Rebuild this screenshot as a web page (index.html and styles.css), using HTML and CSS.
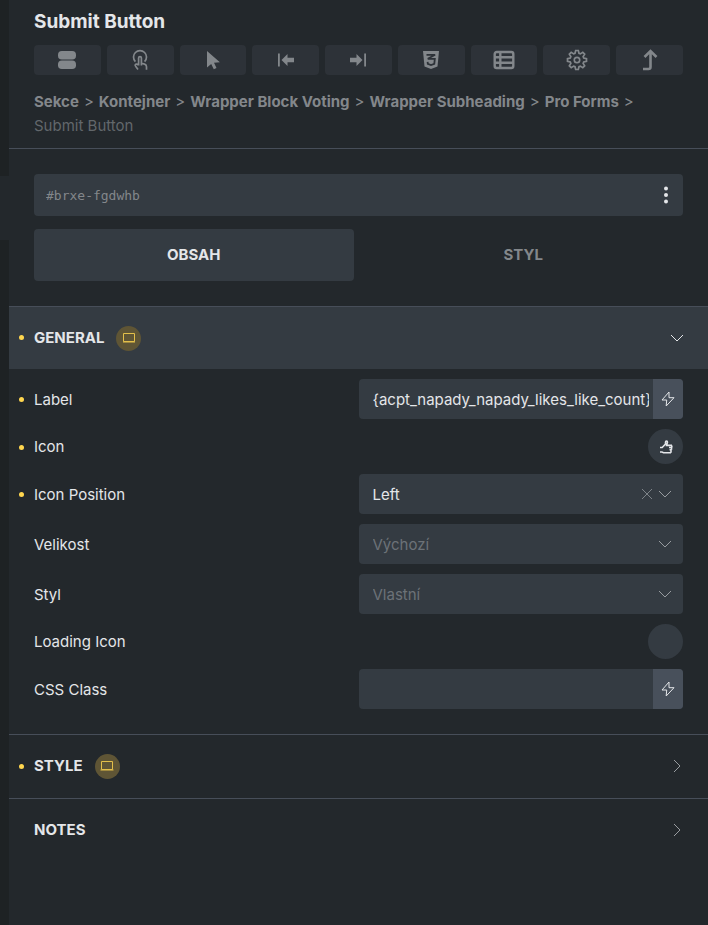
FILE: index.html
```html
<!DOCTYPE html>
<html lang="cs">
<head>
<meta charset="utf-8">
<title>Submit Button</title>
<link rel="stylesheet" href="styles.css">
</head>
<body>
<div class="edge"><div class="edge-handle"></div></div>
<main class="panel">
  <header class="panel-header">
    <h1 class="title">Submit Button</h1>
    <div class="toolbar">
      <button class="tool" aria-label="Block"><svg width="20" height="20" viewBox="0 0 20 20"><rect x="1" y="1" width="18" height="8.500" rx="3.800"/><rect x="1" y="10.500" width="18" height="8.500" rx="3.800"/></svg></button>
      <button class="tool" aria-label="Interactions"><svg width="20" height="22" viewBox="0 0 20 22" class="line"><path d="M5.400 12.700A6.500 6.500 0 1 1 14.600 12.700"/><path d="M8.600 16.500V9a1.400 1.400 0 0 1 2.800 0v5.200l3.200.9c1.300.4 1.900 1.300 1.900 2.600v3M8.600 16.200c-1-1.300-2.700-1.500-3.300-.6-.4.600 0 1.300.5 1.900l2.200 2.900M11.400 14.200v2.200"/></svg></button>
      <button class="tool" aria-label="Pseudo-class"><svg width="20" height="20" viewBox="0 0 20 20"><path d="M4 1v16.600l4.200-3.700 2.600 5.300 2.700-1.300-2.500-5.100 5.900-.5z"/></svg></button>
      <button class="tool" aria-label="Move left"><svg width="20" height="20" viewBox="0 0 20 20"><path d="M2 3.500h1.800v13H2zM5.500 10l6-6v3.700H18v4.600h-6.500V16z"/></svg></button>
      <button class="tool" aria-label="Move right"><svg width="20" height="20" viewBox="0 0 20 20"><path d="M16.200 3.500H18v13h-1.800zM14.500 10l-6-6v3.700H2v4.600h6.500V16z"/></svg></button>
      <button class="tool" aria-label="CSS"><svg width="20" height="20" viewBox="0 0 20 20"><path d="M2 1h16l-1.500 15.500L10 19l-6.500-2.500z"/><path class="cut" d="M5.500 4.800h8.600L6.800 8.800h7l-.5 5-3.300 1.200-3.200-1.200-.2-2"/></svg></button>
      <button class="tool" aria-label="Attributes"><svg width="22" height="20" viewBox="0 0 22 20"><rect class="frame" x="1.700" y="2" width="18.600" height="16" rx="2"/><path class="frame" d="M2 7.300h18M2 12.700h18M7.300 2v16"/></svg></button>
      <button class="tool" aria-label="Settings"><svg width="22" height="22" viewBox="-11 -11 22 22" class="line"><path d="M9.500-1.300V1.300L6.700 2 6.150 3.350 7.670 5.780 5.780 7.670 3.350 6.150 2 6.700 1.300 9.500H-1.300L-2 6.700-3.350 6.150-5.780 7.670-7.670 5.780-6.150 3.350-6.700 2-9.500 1.300V-1.300L-6.700-2-6.150-3.350-7.670-5.780-5.780-7.670-3.350-6.150-2-6.700-1.300-9.500H1.300L2-6.700 3.350-6.150 5.780-7.670 7.670-5.780 6.150-3.350 6.700-2z"/><circle r="2.700"/></svg></button>
      <button class="tool" aria-label="Select parent"><svg width="20" height="22" viewBox="0 0 20 22" class="thick"><path d="M3 20h5.500q2 0 2-2V3M4.500 8l6-6 6 6"/></svg></button>
    </div>
    <nav class="crumbs" aria-label="Breadcrumb"><a href="#">Sekce</a><span class="sep">&gt;</span><a href="#">Kontejner</a><span class="sep">&gt;</span><a href="#">Wrapper Block Voting</a><span class="sep">&gt;</span><a href="#">Wrapper Subheading</a><span class="sep">&gt;</span><a href="#">Pro Forms</a><span class="sep">&gt;</span><br><span class="current">Submit Button</span></nav>
  </header>

  <section class="identity">
    <div class="id-box">
      <input class="id-input" aria-label="Element ID" value="#brxe-fgdwhb">
      <button class="more" aria-label="More"><svg width="6" height="18" viewBox="0 0 6 18"><circle cx="3" cy="2.500" r="2"/><circle cx="3" cy="9" r="2"/><circle cx="3" cy="15.500" r="2"/></svg></button>
    </div>
    <div class="tabs">
      <button class="tab active">Obsah</button>
      <button class="tab">Styl</button>
    </div>
  </section>

  <section class="group">
    <button class="group-head open changed"><span>General</span><span class="device"><svg width="14" height="12" viewBox="0 0 14 12"><path d="M1.500 1.500h11v8h-11zM1 10h12"/></svg></span><svg class="chevron" width="14" height="14" viewBox="0 0 14 14"><path d="M1 4l6 6 6-6"/></svg></button>
    <div class="controls">
      <div class="row changed"><label for="label">Label</label><div class="field"><input id="label" class="box" value="{acpt_napady_napady_likes_like_count}"><button class="dynamic" aria-label="Dynamic data"><svg width="14" height="16" viewBox="0 0 14 16"><path d="M8 1L1 9h4.700L5.200 15 13 6.700H8z"/></svg></button></div></div>
      <div class="row changed"><label for="icon">Icon</label><button id="icon" class="round"><svg width="14" height="14" viewBox="0 0 14 14"><path d="M1 7.500h2.200L6.500 4V2.200q0-1.200 1-1.200t1 1.200L7.600 5.400H13M10 7.500h3M10.500 9.700h2M1 12h2l1.500.7h7.500M12.800 5.400v2.100M12.500 7.500v2.200M12 9.700v3"/></svg></button></div>
      <div class="row changed"><label for="position">Icon Position</label><div class="field"><select id="position" class="box"><option>Left</option></select><button class="clear" aria-label="Clear"><svg width="12" height="12" viewBox="0 0 12 12"><path d="M1 1l10 10M11 1L1 11"/></svg></button><svg class="arrow" width="14" height="14" viewBox="0 0 14 14"><path d="M1 4l6 6 6-6"/></svg></div></div>
      <div class="row"><label for="size">Velikost</label><div class="field"><select id="size" class="box empty"><option>Výchozí</option></select><svg class="arrow" width="14" height="14" viewBox="0 0 14 14"><path d="M1 4l6 6 6-6"/></svg></div></div>
      <div class="row"><label for="style">Styl</label><div class="field"><select id="style" class="box empty"><option>Vlastní</option></select><svg class="arrow" width="14" height="14" viewBox="0 0 14 14"><path d="M1 4l6 6 6-6"/></svg></div></div>
      <div class="row"><label for="loading">Loading Icon</label><button id="loading" class="round"></button></div>
      <div class="row"><label for="css">CSS Class</label><div class="field"><input id="css" class="box"><button class="dynamic" aria-label="Dynamic data"><svg width="14" height="16" viewBox="0 0 14 16"><path d="M8 1L1 9h4.700L5.200 15 13 6.700H8z"/></svg></button></div></div>
    </div>
  </section>
  <section class="group">
    <button class="group-head changed"><span>Style</span><span class="device"><svg width="14" height="12" viewBox="0 0 14 12"><path d="M1.500 1.500h11v8h-11zM.5 10h13"/></svg></span><svg class="chevron" width="14" height="14" viewBox="0 0 14 14"><path d="M4 1l6 6-6 6"/></svg></button>
  </section>
  <section class="group">
    <button class="group-head"><span>Notes</span><svg class="chevron" width="14" height="14" viewBox="0 0 14 14"><path d="M4 1l6 6-6 6"/></svg></button>
  </section>
</main>
</body>
</html>
```
FILE: styles.css
```css
:root {
  --bg: #23282c;
  --box: #343b42;
  --line: #474e59;
  --text: #e4e6e9;
  --muted: #83878b;
  --yellow: #ffd64f;
}

* { box-sizing: border-box; }

body {
  margin: 0;
  min-height: 100vh;
  display: flex;
  background: var(--bg);
  color: var(--text);
  font: 15px/24px Inter, sans-serif;
}

button, input, select {
  margin: 0;
  padding: 0;
  border: 0;
  font: inherit;
  color: inherit;
  background: none;
}

svg {
  display: block;
  fill: none;
  stroke: currentColor;
}

.edge {
  flex: 0 0 9px;
  padding-top: 176px;
  background: #1e2224;
}

.edge-handle {
  height: 64px;
  background: var(--bg);
}

.panel {
  flex: 1;
  min-width: 0;
}

.panel-header {
  padding: 10px 25px;
  border-bottom: 1px solid var(--line);
}

.title {
  margin: 0 0 11px;
  font-size: 19px;
  font-weight: 700;
  line-height: 24px;
}

.toolbar {
  display: grid;
  grid-template-columns: repeat(9, 1fr);
  gap: 6px;
  margin-bottom: 15px;
}

.tool {
  display: flex;
  align-items: center;
  justify-content: center;
  height: 30px;
  border-radius: 4px;
  background: #2d3238;
  color: var(--muted);
}

.tool svg { fill: currentColor; stroke: none; }
.tool .line { fill: none; stroke: currentColor; stroke-width: 1.7; }
.tool .thick { fill: none; stroke: currentColor; stroke-width: 2.6; }
.tool .frame { fill: none; stroke: currentColor; stroke-width: 2.4; }
.tool .cut { fill: none; stroke: #2d3238; stroke-width: 1.8; }

.crumbs { color: var(--muted); }

.crumbs a {
  color: inherit;
  font-weight: 700;
  text-decoration: none;
}

.sep { margin: 0 5px; }
.current { color: #62676b; }

.identity { padding: 25px; }

.id-box {
  display: flex;
  height: 42px;
  margin-bottom: 13px;
  border-radius: 4px;
  background: var(--box);
}

.id-input {
  flex: 1;
  min-width: 0;
  padding-left: 12px;
  color: var(--muted);
  font: 13px "DejaVu Sans Mono", monospace;
}

.more {
  padding: 0 14px;
}

.more svg { fill: currentColor; stroke: none; }

.tabs {
  display: grid;
  grid-template-columns: 1fr 1fr;
  gap: 10px;
}

.tab {
  height: 52px;
  border-radius: 4px;
  color: var(--muted);
  font-weight: 700;
  text-transform: uppercase;
}

.tab.active {
  background: var(--box);
  color: var(--text);
}

.group { border-top: 1px solid var(--line); }

.group-head {
  position: relative;
  display: flex;
  align-items: center;
  gap: 12px;
  width: 100%;
  height: 63px;
  padding: 0 24px 1px 25px;
  font-weight: 700;
  text-transform: uppercase;
}

.group-head.open {
  height: 62px;
  padding-bottom: 0;
  background: var(--box);
}

.device {
  display: flex;
  align-items: center;
  justify-content: center;
  width: 25px;
  height: 25px;
  border-radius: 50%;
  background: #5f5535;
  color: #e3bf4a;
}

.chevron {
  margin-left: auto;
  color: #989ca0;
}

.open .chevron { color: var(--text); }

.changed::before {
  content: "";
  position: absolute;
  left: 10px;
  top: 50%;
  width: 5px;
  height: 5px;
  margin-top: -3px;
  border-radius: 50%;
  background: var(--yellow);
}

.row.changed::before { margin-top: -2px; }

.controls {
  display: grid;
  gap: 10px;
  padding: 10px 0 25px;
}

.row {
  position: relative;
  display: flex;
  align-items: center;
  justify-content: space-between;
  padding: 0 25px;
  line-height: 25px;
}

.field {
  position: relative;
  display: flex;
  width: 50%;
  height: 40px;
  border-radius: 4px;
  overflow: hidden;
  background: var(--box);
}

.box {
  flex: 1;
  min-width: 0;
  margin: 0 4px 0 14px;
  appearance: none;
}

.box.empty { color: #6c7278; }

.dynamic {
  display: flex;
  align-items: center;
  justify-content: center;
  width: 30px;
  background: #48505b;
}

.clear {
  color: #7d8388;
  margin-right: 5px;
}

.arrow {
  align-self: center;
  margin-right: 11px;
  color: #989ca0;
}

.round {
  display: flex;
  align-items: center;
  justify-content: center;
  width: 35px;
  height: 35px;
  border-radius: 50%;
  background: var(--box);
}

.round svg { stroke-width: 1.6; }
```
